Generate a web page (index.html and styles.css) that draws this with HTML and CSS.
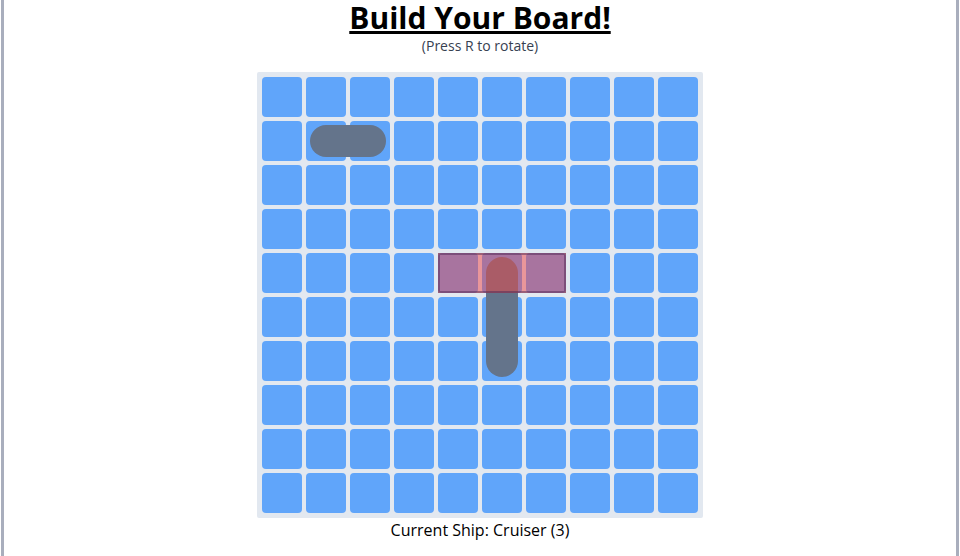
FILE: index.html
```html
<!DOCTYPE html>
<html lang="en">
<head>
<meta charset="utf-8">
<title>Build Your Board</title>
<link rel="stylesheet" href="styles.css">
</head>
<body>
<div class="frame">
  <main class="setup">
    <h1 class="title">Build Your Board!</h1>
    <p class="hint">(Press R to rotate)</p>
    <div class="board">
      <div class="grid">
        <div class="cell"></div><div class="cell"></div><div class="cell"></div><div class="cell"></div><div class="cell"></div><div class="cell"></div><div class="cell"></div><div class="cell"></div><div class="cell"></div><div class="cell"></div>
        <div class="cell"></div><div class="cell"></div><div class="cell"></div><div class="cell"></div><div class="cell"></div><div class="cell"></div><div class="cell"></div><div class="cell"></div><div class="cell"></div><div class="cell"></div>
        <div class="cell"></div><div class="cell"></div><div class="cell"></div><div class="cell"></div><div class="cell"></div><div class="cell"></div><div class="cell"></div><div class="cell"></div><div class="cell"></div><div class="cell"></div>
        <div class="cell"></div><div class="cell"></div><div class="cell"></div><div class="cell"></div><div class="cell"></div><div class="cell"></div><div class="cell"></div><div class="cell"></div><div class="cell"></div><div class="cell"></div>
        <div class="cell"></div><div class="cell"></div><div class="cell"></div><div class="cell"></div><div class="cell"></div><div class="cell"></div><div class="cell"></div><div class="cell"></div><div class="cell"></div><div class="cell"></div>
        <div class="cell"></div><div class="cell"></div><div class="cell"></div><div class="cell"></div><div class="cell"></div><div class="cell"></div><div class="cell"></div><div class="cell"></div><div class="cell"></div><div class="cell"></div>
        <div class="cell"></div><div class="cell"></div><div class="cell"></div><div class="cell"></div><div class="cell"></div><div class="cell"></div><div class="cell"></div><div class="cell"></div><div class="cell"></div><div class="cell"></div>
        <div class="cell"></div><div class="cell"></div><div class="cell"></div><div class="cell"></div><div class="cell"></div><div class="cell"></div><div class="cell"></div><div class="cell"></div><div class="cell"></div><div class="cell"></div>
        <div class="cell"></div><div class="cell"></div><div class="cell"></div><div class="cell"></div><div class="cell"></div><div class="cell"></div><div class="cell"></div><div class="cell"></div><div class="cell"></div><div class="cell"></div>
        <div class="cell"></div><div class="cell"></div><div class="cell"></div><div class="cell"></div><div class="cell"></div><div class="cell"></div><div class="cell"></div><div class="cell"></div><div class="cell"></div><div class="cell"></div>
      </div>
      <div class="overlay">
        <div class="ship ship-destroyer"></div>
        <div class="ship ship-submarine"></div>
        <div class="preview"></div>
      </div>
    </div>
    <p class="current">Current Ship: Cruiser (3)</p>
  </main>
</div>
</body>
</html>
```
FILE: styles.css
```css
html, body {
  margin: 0;
  padding: 0;
  background: #ffffff;
}

body {
  font-family: "Open Sans", "Noto Sans", sans-serif;
  color: #000;
}

.frame {
  margin: 0 1px;
  min-height: 556px;
  box-sizing: border-box;
  border-left: 3px solid #a9aebd;
  border-right: 3px solid #a9aebd;
}

.setup {
  display: flex;
  flex-direction: column;
  align-items: center;
}

.title {
  margin: 0;
  font-size: 30px;
  line-height: 36px;
  font-weight: 700;
  text-decoration: underline;
  text-decoration-thickness: 3px;
  text-underline-offset: 2px;
}

.hint {
  margin: 0;
  font-size: 14px;
  line-height: 20px;
  color: #374151;
}

.board {
  position: relative;
  margin-top: 16px;
  padding: 5px;
  background: #e2e8f0;
  border-radius: 2px;
}

.grid,
.overlay {
  display: grid;
  grid-template-columns: repeat(10, 40px);
  grid-template-rows: repeat(10, 40px);
  gap: 4px;
}

.overlay {
  position: absolute;
  top: 5px;
  left: 5px;
}

.cell {
  background: #60a5fa;
  border-radius: 4px;
}

.ship {
  background: #64748b;
  border-radius: 9999px;
  margin: 4px;
}

.ship-destroyer {
  grid-row: 2;
  grid-column: 2 / 4;
}

.ship-submarine {
  grid-row: 5 / 8;
  grid-column: 6;
}

.preview {
  grid-row: 5;
  grid-column: 5 / 8;
  box-sizing: border-box;
  background: rgba(239, 68, 68, 0.5);
  border: 2px solid rgba(80, 40, 85, 0.5);
}

.current {
  margin: 0;
  font-size: 16px;
  line-height: 24px;
}
```
